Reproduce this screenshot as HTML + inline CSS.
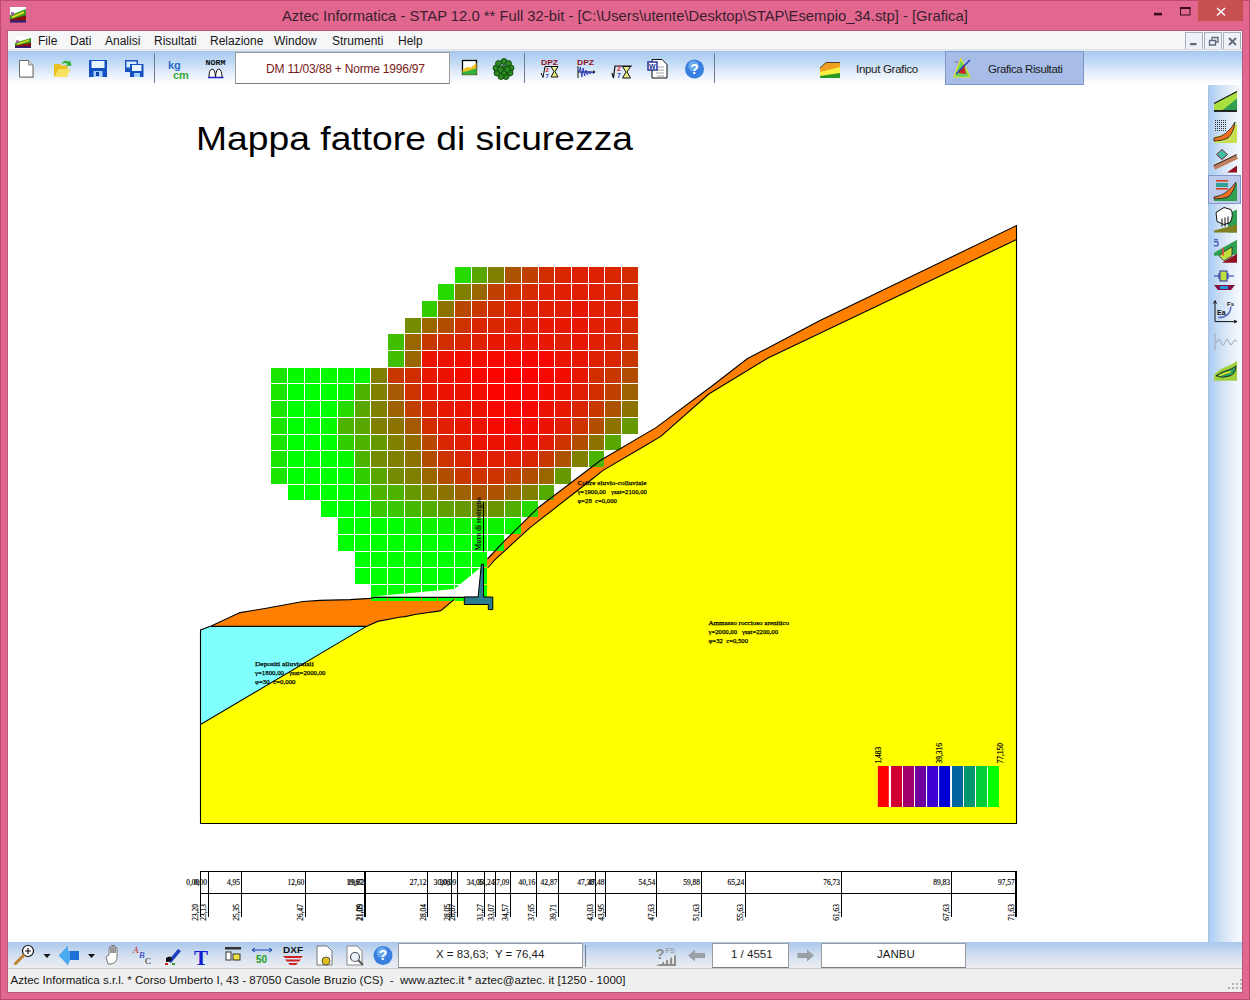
<!DOCTYPE html>
<html><head><meta charset="utf-8">
<style>
*{box-sizing:border-box}
html,body{margin:0;padding:0}
body{width:1250px;height:1000px;position:relative;overflow:hidden;background:#e2678f;font-family:"Liberation Sans",sans-serif;}
.abs{position:absolute}
#ttext{position:absolute;left:282px;top:8px;font-size:14.8px;color:#3a1e30;white-space:nowrap;}
#client{position:absolute;left:8px;top:31px;width:1234px;height:961px;background:#fff;}
#menu{position:absolute;left:8px;top:31px;width:1234px;height:20px;background:#f5f6f8;}
#menu span{position:absolute;top:3px;font-size:12px;color:#151515;}
#tb{position:absolute;left:8px;top:49px;width:1234px;height:39px;background:linear-gradient(#dde0e4 0px,#dde0e4 1px,#e2eefa 1px,#e2eefa 2px,#acc3da 2px,#acc3da 3px,#aacbf2 3px,#c3dbf5 14px,#e4eefa 24px,#fff 35px);}
#rtb{position:absolute;left:1208px;top:85px;width:34px;height:857px;background:linear-gradient(90deg,#aac0d8 0px,#aac0d8 1px,#aecff5 1px,#aecff5 3px,#c6dcf3 10px,#e3edf9 22px,#f6f9fe 32px);}
#btb{position:absolute;left:8px;top:942px;width:1234px;height:27px;background:linear-gradient(#a9c7ec,#d2dff0 50%,#eceef1);border-bottom:1px solid #c9cbce}
#status{position:absolute;left:8px;top:969px;width:1234px;height:23px;background:#efefef;}
#status span{position:absolute;left:2.5px;top:4.5px;font-size:11.55px;color:#151515;white-space:nowrap}
.box{position:absolute;background:#fff;border:1px solid #9c9c9c;border-bottom-color:#7c7c7c}
.sep{position:absolute;width:1px;background:#6d7c90;}
.tbt{position:absolute;font-size:11.5px;color:#1b1b1b;white-space:nowrap}
#closebtn{position:absolute;left:1198px;top:0;width:45px;height:21px;background:#c75050;}
.mdib{position:absolute;top:32px;width:18px;height:18px;border:1px solid #a8b0bc;background:#eef2f7}
</style></head><body>
<div id="ttext">Aztec Informatica - STAP 12.0 ** Full 32-bit - [C:\Users\utente\Desktop\STAP\Esempio_34.stp] - [Grafica]</div>
<div class="abs" style="left:0;top:0;width:1250px;height:1000px;border:1px solid #bb4a74"></div><div class="abs" style="left:7px;top:30px;width:1236px;height:963px;background:#b55a7e"></div><div id="closebtn"></div>
<div id="client"></div>
<div id="menu">
<span style="left:30px">File</span><span style="left:62px">Dati</span><span style="left:97px">Analisi</span><span style="left:146px">Risultati</span><span style="left:202px">Relazione</span><span style="left:266px">Window</span><span style="left:324px">Strumenti</span><span style="left:390px">Help</span>
</div>
<div class="mdib" style="left:1185px"></div><div class="mdib" style="left:1204px"></div><div class="mdib" style="left:1223px"></div>
<div id="tb"></div>
<div class="sep" style="left:154px;top:53px;height:30px"></div>
<div class="sep" style="left:524px;top:53px;height:30px"></div>
<div class="sep" style="left:714px;top:53px;height:30px"></div>
<div class="box" style="left:235px;top:52px;width:215px;height:32px"></div>
<div class="tbt" style="left:266px;top:62px;color:#7a1a1a;font-size:12px;letter-spacing:-0.2px">DM 11/03/88 + Norme 1996/97</div>
<div class="tbt" style="left:856px;top:63px;letter-spacing:-0.3px">Input Grafico</div>
<div class="abs" style="left:945px;top:51px;width:139px;height:34px;background:#a7bde8;border:1px solid #7d95c8"></div>
<div class="tbt" style="left:988px;top:63px;letter-spacing:-0.4px">Grafica Risultati</div>
<div id="rtb"></div>
<div class="abs" style="left:1208px;top:175px;width:33px;height:29px;background:#bccbeb;border:1px solid #8397c9"></div>
<div id="btb"></div>
<div class="box" style="left:398px;top:943px;width:185px;height:25px"></div>
<div class="tbt" style="left:436px;top:948px">X = 83,63;&nbsp; Y = 76,44</div>
<div class="sep" style="left:585px;top:945px;height:22px"></div>
<div class="box" style="left:712px;top:943px;width:77px;height:25px"></div>
<div class="tbt" style="left:731px;top:948px">1 / 4551</div>
<div class="box" style="left:821px;top:943px;width:145px;height:25px"></div>
<div class="tbt" style="left:877px;top:948px">JANBU</div>
<div id="status"><span>Aztec Informatica s.r.l. * Corso Umberto I, 43 - 87050 Casole Bruzio (CS)&nbsp; -&nbsp; www.aztec.it * aztec@aztec. it [1250 - 1000]</span></div>

<svg class="abs" style="left:0;top:0" width="1250" height="1000" viewBox="0 0 1250 1000">
<text x="196" y="149.7" font-family="Liberation Sans" font-size="32.5" textLength="437" lengthAdjust="spacingAndGlyphs" fill="#000">Mappa fattore di sicurezza</text>
<g stroke="none">
<polygon fill="#ffff00" points="200.5,724.5 366.4,626.4 377.6,621.4 399.4,617.2 405,616.6 416.2,614.2 438.6,611.1 441.4,610.2 454.3,599.3 479,597.4 484,569 495,559.6 530,527.6 590,480.8 603,470.4 645,445.8 660.8,436.4 708.8,394 768,358 1016.5,239.6 1016.5,823.8 200.5,823.8"/>
<polygon fill="#80ffff" points="200.5,630 211.2,626.1 366.4,626.4 200.5,724.5"/>
<polygon fill="#ff8000" points="211.2,626.1 240,612.6 265,608.5 303,601.5 320,600.4 350,599.6 370,598.4 375,597.4 464,597.4 454.3,599.3 441.4,610.2 438.6,611.1 416.2,614.2 405,616.6 399.4,617.2 377.6,621.4 366.4,626.4"/>
<polygon fill="#ff8000" points="483.5,562 505,540.4 538.4,507.5 601,460 656,427.6 712,386 747.2,358.8 820,320.6 1016.5,225.6 1016.5,239.6 768,358 708.8,394 660.8,436.4 645,445.8 603,470.4 590,480.8 530,527.6 495,559.6 484,569"/>
</g>
<g shape-rendering="crispEdges">
<rect x="455" y="267" width="16" height="16" fill="#26d900"/>
<rect x="472" y="267" width="15" height="16" fill="#59a600"/>
<rect x="488" y="267" width="16" height="16" fill="#807f00"/>
<rect x="505" y="267" width="16" height="16" fill="#ad5200"/>
<rect x="522" y="267" width="16" height="16" fill="#bf4000"/>
<rect x="539" y="267" width="15" height="16" fill="#d12e00"/>
<rect x="555" y="267" width="16" height="16" fill="#d92600"/>
<rect x="572" y="267" width="16" height="16" fill="#de2100"/>
<rect x="589" y="267" width="15" height="16" fill="#de2100"/>
<rect x="605" y="267" width="16" height="16" fill="#d92600"/>
<rect x="622" y="267" width="16" height="16" fill="#d42b00"/>
<rect x="438" y="284" width="16" height="16" fill="#26d900"/>
<rect x="455" y="284" width="16" height="16" fill="#807f00"/>
<rect x="472" y="284" width="15" height="16" fill="#996600"/>
<rect x="488" y="284" width="16" height="16" fill="#bf4000"/>
<rect x="505" y="284" width="16" height="16" fill="#cc3300"/>
<rect x="522" y="284" width="16" height="16" fill="#d42b00"/>
<rect x="539" y="284" width="15" height="16" fill="#de2100"/>
<rect x="555" y="284" width="16" height="16" fill="#e01f00"/>
<rect x="572" y="284" width="16" height="16" fill="#e01f00"/>
<rect x="589" y="284" width="15" height="16" fill="#e01f00"/>
<rect x="605" y="284" width="16" height="16" fill="#db2400"/>
<rect x="622" y="284" width="16" height="16" fill="#d42b00"/>
<rect x="422" y="301" width="15" height="16" fill="#33cc00"/>
<rect x="438" y="301" width="16" height="16" fill="#8c7300"/>
<rect x="455" y="301" width="16" height="16" fill="#b84700"/>
<rect x="472" y="301" width="15" height="16" fill="#c73800"/>
<rect x="488" y="301" width="16" height="16" fill="#d12e00"/>
<rect x="505" y="301" width="16" height="16" fill="#db2400"/>
<rect x="522" y="301" width="16" height="16" fill="#de2100"/>
<rect x="539" y="301" width="15" height="16" fill="#e01f00"/>
<rect x="555" y="301" width="16" height="16" fill="#e01f00"/>
<rect x="572" y="301" width="16" height="16" fill="#e61900"/>
<rect x="589" y="301" width="15" height="16" fill="#e01f00"/>
<rect x="605" y="301" width="16" height="16" fill="#de2100"/>
<rect x="622" y="301" width="16" height="16" fill="#d92600"/>
<rect x="405" y="318" width="16" height="15" fill="#738c00"/>
<rect x="422" y="318" width="15" height="15" fill="#996600"/>
<rect x="438" y="318" width="16" height="15" fill="#b24d00"/>
<rect x="455" y="318" width="16" height="15" fill="#cc3300"/>
<rect x="472" y="318" width="15" height="15" fill="#d92600"/>
<rect x="488" y="318" width="16" height="15" fill="#d92600"/>
<rect x="505" y="318" width="16" height="15" fill="#de2100"/>
<rect x="522" y="318" width="16" height="15" fill="#e01f00"/>
<rect x="539" y="318" width="15" height="15" fill="#e61900"/>
<rect x="555" y="318" width="16" height="15" fill="#e61900"/>
<rect x="572" y="318" width="16" height="15" fill="#e61900"/>
<rect x="589" y="318" width="15" height="15" fill="#e01f00"/>
<rect x="605" y="318" width="16" height="15" fill="#de2100"/>
<rect x="622" y="318" width="16" height="15" fill="#d42b00"/>
<rect x="388" y="334" width="16" height="16" fill="#40bf00"/>
<rect x="405" y="334" width="16" height="16" fill="#996600"/>
<rect x="422" y="334" width="15" height="16" fill="#c73800"/>
<rect x="438" y="334" width="16" height="16" fill="#d12e00"/>
<rect x="455" y="334" width="16" height="16" fill="#d92600"/>
<rect x="472" y="334" width="15" height="16" fill="#de2100"/>
<rect x="488" y="334" width="16" height="16" fill="#e61900"/>
<rect x="505" y="334" width="16" height="16" fill="#e61900"/>
<rect x="522" y="334" width="16" height="16" fill="#e61900"/>
<rect x="539" y="334" width="15" height="16" fill="#e61900"/>
<rect x="555" y="334" width="16" height="16" fill="#e01f00"/>
<rect x="572" y="334" width="16" height="16" fill="#e61900"/>
<rect x="589" y="334" width="15" height="16" fill="#e01f00"/>
<rect x="605" y="334" width="16" height="16" fill="#d92600"/>
<rect x="622" y="334" width="16" height="16" fill="#d12e00"/>
<rect x="388" y="351" width="16" height="16" fill="#40bf00"/>
<rect x="405" y="351" width="16" height="16" fill="#996600"/>
<rect x="422" y="351" width="15" height="16" fill="#eb1400"/>
<rect x="438" y="351" width="16" height="16" fill="#ed1200"/>
<rect x="455" y="351" width="16" height="16" fill="#f20d00"/>
<rect x="472" y="351" width="15" height="16" fill="#f20d00"/>
<rect x="488" y="351" width="16" height="16" fill="#f70800"/>
<rect x="505" y="351" width="16" height="16" fill="#f70800"/>
<rect x="522" y="351" width="16" height="16" fill="#f70800"/>
<rect x="539" y="351" width="15" height="16" fill="#f70800"/>
<rect x="555" y="351" width="16" height="16" fill="#eb1400"/>
<rect x="572" y="351" width="16" height="16" fill="#e61900"/>
<rect x="589" y="351" width="15" height="16" fill="#de2100"/>
<rect x="605" y="351" width="16" height="16" fill="#d92600"/>
<rect x="622" y="351" width="16" height="16" fill="#c73800"/>
<rect x="271" y="368" width="16" height="15" fill="#1ae500"/>
<rect x="288" y="368" width="16" height="15" fill="#05fa00"/>
<rect x="305" y="368" width="15" height="15" fill="#05fa00"/>
<rect x="321" y="368" width="16" height="15" fill="#05fa00"/>
<rect x="338" y="368" width="16" height="15" fill="#05fa00"/>
<rect x="355" y="368" width="15" height="15" fill="#05fa00"/>
<rect x="371" y="368" width="16" height="15" fill="#807f00"/>
<rect x="388" y="368" width="16" height="15" fill="#c73800"/>
<rect x="405" y="368" width="16" height="15" fill="#d12e00"/>
<rect x="422" y="368" width="15" height="15" fill="#e61900"/>
<rect x="438" y="368" width="16" height="15" fill="#ed1200"/>
<rect x="455" y="368" width="16" height="15" fill="#f20d00"/>
<rect x="472" y="368" width="15" height="15" fill="#f70800"/>
<rect x="488" y="368" width="16" height="15" fill="#fa0500"/>
<rect x="505" y="368" width="16" height="15" fill="#ff0000"/>
<rect x="522" y="368" width="16" height="15" fill="#fa0500"/>
<rect x="539" y="368" width="15" height="15" fill="#f70800"/>
<rect x="555" y="368" width="16" height="15" fill="#f20d00"/>
<rect x="572" y="368" width="16" height="15" fill="#e61900"/>
<rect x="589" y="368" width="15" height="15" fill="#d12e00"/>
<rect x="605" y="368" width="16" height="15" fill="#c73800"/>
<rect x="622" y="368" width="16" height="15" fill="#b24d00"/>
<rect x="271" y="384" width="16" height="16" fill="#1ae500"/>
<rect x="288" y="384" width="16" height="16" fill="#00ff00"/>
<rect x="305" y="384" width="15" height="16" fill="#00ff00"/>
<rect x="321" y="384" width="16" height="16" fill="#00ff00"/>
<rect x="338" y="384" width="16" height="16" fill="#05fa00"/>
<rect x="355" y="384" width="15" height="16" fill="#4cb300"/>
<rect x="371" y="384" width="16" height="16" fill="#807f00"/>
<rect x="388" y="384" width="16" height="16" fill="#a65900"/>
<rect x="405" y="384" width="16" height="16" fill="#cc3300"/>
<rect x="422" y="384" width="15" height="16" fill="#e61900"/>
<rect x="438" y="384" width="16" height="16" fill="#eb1400"/>
<rect x="455" y="384" width="16" height="16" fill="#ed1200"/>
<rect x="472" y="384" width="15" height="16" fill="#f20d00"/>
<rect x="488" y="384" width="16" height="16" fill="#fa0500"/>
<rect x="505" y="384" width="16" height="16" fill="#fa0500"/>
<rect x="522" y="384" width="16" height="16" fill="#f70800"/>
<rect x="539" y="384" width="15" height="16" fill="#f20d00"/>
<rect x="555" y="384" width="16" height="16" fill="#ed1200"/>
<rect x="572" y="384" width="16" height="16" fill="#e01f00"/>
<rect x="589" y="384" width="15" height="16" fill="#d12e00"/>
<rect x="605" y="384" width="16" height="16" fill="#bf4000"/>
<rect x="622" y="384" width="16" height="16" fill="#9e6100"/>
<rect x="271" y="401" width="16" height="16" fill="#1ae500"/>
<rect x="288" y="401" width="16" height="16" fill="#00ff00"/>
<rect x="305" y="401" width="15" height="16" fill="#00ff00"/>
<rect x="321" y="401" width="16" height="16" fill="#00ff00"/>
<rect x="338" y="401" width="16" height="16" fill="#26d900"/>
<rect x="355" y="401" width="15" height="16" fill="#59a600"/>
<rect x="371" y="401" width="16" height="16" fill="#807f00"/>
<rect x="388" y="401" width="16" height="16" fill="#9e6100"/>
<rect x="405" y="401" width="16" height="16" fill="#bf4000"/>
<rect x="422" y="401" width="15" height="16" fill="#d92600"/>
<rect x="438" y="401" width="16" height="16" fill="#e61900"/>
<rect x="455" y="401" width="16" height="16" fill="#eb1400"/>
<rect x="472" y="401" width="15" height="16" fill="#ed1200"/>
<rect x="488" y="401" width="16" height="16" fill="#f70800"/>
<rect x="505" y="401" width="16" height="16" fill="#f70800"/>
<rect x="522" y="401" width="16" height="16" fill="#f70800"/>
<rect x="539" y="401" width="15" height="16" fill="#ed1200"/>
<rect x="555" y="401" width="16" height="16" fill="#e61900"/>
<rect x="572" y="401" width="16" height="16" fill="#d92600"/>
<rect x="589" y="401" width="15" height="16" fill="#c73800"/>
<rect x="605" y="401" width="16" height="16" fill="#ad5200"/>
<rect x="622" y="401" width="16" height="16" fill="#8c7300"/>
<rect x="271" y="418" width="16" height="16" fill="#1ae500"/>
<rect x="288" y="418" width="16" height="16" fill="#00ff00"/>
<rect x="305" y="418" width="15" height="16" fill="#00ff00"/>
<rect x="321" y="418" width="16" height="16" fill="#05fa00"/>
<rect x="338" y="418" width="16" height="16" fill="#4cb300"/>
<rect x="355" y="418" width="15" height="16" fill="#59a600"/>
<rect x="371" y="418" width="16" height="16" fill="#807f00"/>
<rect x="388" y="418" width="16" height="16" fill="#8c7300"/>
<rect x="405" y="418" width="16" height="16" fill="#a65900"/>
<rect x="422" y="418" width="15" height="16" fill="#d12e00"/>
<rect x="438" y="418" width="16" height="16" fill="#e01f00"/>
<rect x="455" y="418" width="16" height="16" fill="#e61900"/>
<rect x="472" y="418" width="15" height="16" fill="#eb1400"/>
<rect x="488" y="418" width="16" height="16" fill="#f70800"/>
<rect x="505" y="418" width="16" height="16" fill="#f70800"/>
<rect x="522" y="418" width="16" height="16" fill="#f20d00"/>
<rect x="539" y="418" width="15" height="16" fill="#eb1400"/>
<rect x="555" y="418" width="16" height="16" fill="#e01f00"/>
<rect x="572" y="418" width="16" height="16" fill="#cc3300"/>
<rect x="589" y="418" width="15" height="16" fill="#b24d00"/>
<rect x="605" y="418" width="16" height="16" fill="#8c7300"/>
<rect x="622" y="418" width="16" height="16" fill="#669900"/>
<rect x="271" y="435" width="16" height="15" fill="#1ae500"/>
<rect x="288" y="435" width="16" height="15" fill="#00ff00"/>
<rect x="305" y="435" width="15" height="15" fill="#00ff00"/>
<rect x="321" y="435" width="16" height="15" fill="#00ff00"/>
<rect x="338" y="435" width="16" height="15" fill="#33cc00"/>
<rect x="355" y="435" width="15" height="15" fill="#4cb300"/>
<rect x="371" y="435" width="16" height="15" fill="#669900"/>
<rect x="388" y="435" width="16" height="15" fill="#807f00"/>
<rect x="405" y="435" width="16" height="15" fill="#946b00"/>
<rect x="422" y="435" width="15" height="15" fill="#b84700"/>
<rect x="438" y="435" width="16" height="15" fill="#d92600"/>
<rect x="455" y="435" width="16" height="15" fill="#e01f00"/>
<rect x="472" y="435" width="15" height="15" fill="#eb1400"/>
<rect x="488" y="435" width="16" height="15" fill="#ed1200"/>
<rect x="505" y="435" width="16" height="15" fill="#ed1200"/>
<rect x="522" y="435" width="16" height="15" fill="#eb1400"/>
<rect x="539" y="435" width="15" height="15" fill="#e01f00"/>
<rect x="555" y="435" width="16" height="15" fill="#cc3300"/>
<rect x="572" y="435" width="16" height="15" fill="#b24d00"/>
<rect x="589" y="435" width="15" height="15" fill="#8c7300"/>
<rect x="605" y="435" width="16" height="15" fill="#59a600"/>
<rect x="271" y="451" width="16" height="16" fill="#1ae500"/>
<rect x="288" y="451" width="16" height="16" fill="#00ff00"/>
<rect x="305" y="451" width="15" height="16" fill="#00ff00"/>
<rect x="321" y="451" width="16" height="16" fill="#00ff00"/>
<rect x="338" y="451" width="16" height="16" fill="#05fa00"/>
<rect x="355" y="451" width="15" height="16" fill="#4cb300"/>
<rect x="371" y="451" width="16" height="16" fill="#738c00"/>
<rect x="388" y="451" width="16" height="16" fill="#807f00"/>
<rect x="405" y="451" width="16" height="16" fill="#8c7300"/>
<rect x="422" y="451" width="15" height="16" fill="#b24d00"/>
<rect x="438" y="451" width="16" height="16" fill="#cc3300"/>
<rect x="455" y="451" width="16" height="16" fill="#d92600"/>
<rect x="472" y="451" width="15" height="16" fill="#e01f00"/>
<rect x="488" y="451" width="16" height="16" fill="#e01f00"/>
<rect x="505" y="451" width="16" height="16" fill="#e01f00"/>
<rect x="522" y="451" width="16" height="16" fill="#d92600"/>
<rect x="539" y="451" width="15" height="16" fill="#c73800"/>
<rect x="555" y="451" width="16" height="16" fill="#ad5200"/>
<rect x="572" y="451" width="16" height="16" fill="#807f00"/>
<rect x="589" y="451" width="15" height="16" fill="#4cb300"/>
<rect x="271" y="468" width="16" height="16" fill="#1ae500"/>
<rect x="288" y="468" width="16" height="16" fill="#00ff00"/>
<rect x="305" y="468" width="15" height="16" fill="#00ff00"/>
<rect x="321" y="468" width="16" height="16" fill="#00ff00"/>
<rect x="338" y="468" width="16" height="16" fill="#00ff00"/>
<rect x="355" y="468" width="15" height="16" fill="#33cc00"/>
<rect x="371" y="468" width="16" height="16" fill="#59a600"/>
<rect x="388" y="468" width="16" height="16" fill="#738c00"/>
<rect x="405" y="468" width="16" height="16" fill="#807f00"/>
<rect x="422" y="468" width="15" height="16" fill="#996600"/>
<rect x="438" y="468" width="16" height="16" fill="#b24d00"/>
<rect x="455" y="468" width="16" height="16" fill="#c73800"/>
<rect x="472" y="468" width="15" height="16" fill="#cc3300"/>
<rect x="488" y="468" width="16" height="16" fill="#cc3300"/>
<rect x="505" y="468" width="16" height="16" fill="#bf4000"/>
<rect x="522" y="468" width="16" height="16" fill="#b24d00"/>
<rect x="539" y="468" width="15" height="16" fill="#996600"/>
<rect x="555" y="468" width="16" height="16" fill="#669900"/>
<rect x="288" y="485" width="16" height="15" fill="#00ff00"/>
<rect x="305" y="485" width="15" height="15" fill="#00ff00"/>
<rect x="321" y="485" width="16" height="15" fill="#00ff00"/>
<rect x="338" y="485" width="16" height="15" fill="#00ff00"/>
<rect x="355" y="485" width="15" height="15" fill="#0df200"/>
<rect x="371" y="485" width="16" height="15" fill="#4cb300"/>
<rect x="388" y="485" width="16" height="15" fill="#4cb300"/>
<rect x="405" y="485" width="16" height="15" fill="#669900"/>
<rect x="422" y="485" width="15" height="15" fill="#807f00"/>
<rect x="438" y="485" width="16" height="15" fill="#8c7300"/>
<rect x="455" y="485" width="16" height="15" fill="#9e6100"/>
<rect x="472" y="485" width="15" height="15" fill="#ad5200"/>
<rect x="488" y="485" width="16" height="15" fill="#ad5200"/>
<rect x="505" y="485" width="16" height="15" fill="#996600"/>
<rect x="522" y="485" width="16" height="15" fill="#807f00"/>
<rect x="539" y="485" width="15" height="15" fill="#54ab00"/>
<rect x="321" y="501" width="16" height="16" fill="#00ff00"/>
<rect x="338" y="501" width="16" height="16" fill="#00ff00"/>
<rect x="355" y="501" width="15" height="16" fill="#00ff00"/>
<rect x="371" y="501" width="16" height="16" fill="#38c700"/>
<rect x="388" y="501" width="16" height="16" fill="#38c700"/>
<rect x="405" y="501" width="16" height="16" fill="#47b800"/>
<rect x="422" y="501" width="15" height="16" fill="#52ad00"/>
<rect x="438" y="501" width="16" height="16" fill="#619e00"/>
<rect x="455" y="501" width="16" height="16" fill="#669900"/>
<rect x="472" y="501" width="15" height="16" fill="#738c00"/>
<rect x="488" y="501" width="16" height="16" fill="#6b9400"/>
<rect x="505" y="501" width="16" height="16" fill="#52ad00"/>
<rect x="522" y="501" width="16" height="16" fill="#26d900"/>
<rect x="338" y="518" width="16" height="16" fill="#00ff00"/>
<rect x="355" y="518" width="15" height="16" fill="#00ff00"/>
<rect x="371" y="518" width="16" height="16" fill="#00ff00"/>
<rect x="388" y="518" width="16" height="16" fill="#00ff00"/>
<rect x="405" y="518" width="16" height="16" fill="#0df200"/>
<rect x="422" y="518" width="15" height="16" fill="#0df200"/>
<rect x="438" y="518" width="16" height="16" fill="#0df200"/>
<rect x="455" y="518" width="16" height="16" fill="#0df200"/>
<rect x="472" y="518" width="15" height="16" fill="#0df200"/>
<rect x="488" y="518" width="16" height="16" fill="#0df200"/>
<rect x="505" y="518" width="16" height="16" fill="#05fa00"/>
<rect x="338" y="535" width="16" height="16" fill="#00ff00"/>
<rect x="355" y="535" width="15" height="16" fill="#00ff00"/>
<rect x="371" y="535" width="16" height="16" fill="#00ff00"/>
<rect x="388" y="535" width="16" height="16" fill="#00ff00"/>
<rect x="405" y="535" width="16" height="16" fill="#00ff00"/>
<rect x="422" y="535" width="15" height="16" fill="#00ff00"/>
<rect x="438" y="535" width="16" height="16" fill="#00ff00"/>
<rect x="455" y="535" width="16" height="16" fill="#00ff00"/>
<rect x="472" y="535" width="15" height="16" fill="#00ff00"/>
<rect x="488" y="535" width="16" height="16" fill="#00ff00"/>
<rect x="355" y="552" width="15" height="15" fill="#00ff00"/>
<rect x="371" y="552" width="16" height="15" fill="#00ff00"/>
<rect x="388" y="552" width="16" height="15" fill="#00ff00"/>
<rect x="405" y="552" width="16" height="15" fill="#00ff00"/>
<rect x="422" y="552" width="15" height="15" fill="#00ff00"/>
<rect x="438" y="552" width="16" height="15" fill="#00ff00"/>
<rect x="455" y="552" width="16" height="15" fill="#00ff00"/>
<rect x="472" y="552" width="15" height="15" fill="#00ff00"/>
<rect x="355" y="568" width="15" height="16" fill="#00ff00"/>
<rect x="371" y="568" width="16" height="16" fill="#00ff00"/>
<rect x="388" y="568" width="16" height="16" fill="#00ff00"/>
<rect x="405" y="568" width="16" height="16" fill="#00ff00"/>
<rect x="422" y="568" width="15" height="16" fill="#00ff00"/>
<rect x="438" y="568" width="16" height="16" fill="#00ff00"/>
<rect x="455" y="568" width="16" height="16" fill="#00ff00"/>
<rect x="472" y="568" width="15" height="16" fill="#00ff00"/>
<rect x="371" y="585" width="16" height="16" fill="#00ff00"/>
<rect x="388" y="585" width="16" height="16" fill="#00ff00"/>
<rect x="405" y="585" width="16" height="16" fill="#00ff00"/>
<rect x="422" y="585" width="15" height="16" fill="#00ff00"/>
<rect x="438" y="585" width="16" height="16" fill="#00ff00"/>
<rect x="455" y="585" width="16" height="16" fill="#00ff00"/>
<rect x="472" y="585" width="15" height="16" fill="#00ff00"/>
</g>
<polygon fill="#fff" points="371.4,596.5 454.3,589 480.5,567.5 479,597.4"/>
<g fill="none" stroke="#000" stroke-width="1.1">
<polyline points="200.5,823.5 200.5,630 211.2,626.1 240,612.6 265,608.5 303,601.5 320,600.4 350,599.6 370,598.4 375,597.4 479,597.4"/>
<polyline points="211.2,626.4 366.4,626.4"/>
<polyline points="200.5,724.5 366.4,626.4 377.6,621.4 399.4,617.2 405,616.6 416.2,614.2 438.6,611.1 441.4,610.2 454.3,599.3"/>
<polyline points="487.5,559 505,540.4 538.4,507.5 601,460 656,427.6 712,386 747.2,358.8 820,320.6 1016.5,225.6 1016.5,823.5 200,823.5"/>
<polyline points="1016.5,239.6 768,358 708.8,394 660.8,436.4 645,445.8 603,470.4 590,480.8 530,527.6 495,559.6 487.5,568"/>
</g>
<polygon fill="#2a7d8c" stroke="#000" stroke-width="1" points="481.4,564.3 483.5,564.3 483.5,597 492.8,597 492.8,609.6 488.3,609.6 488.3,604.5 464.3,604.5 464.3,597 478.1,597"/>

<text x="577.4" y="484.8" font-family="Liberation Serif" font-size="7" textLength="69" lengthAdjust="spacingAndGlyphs" fill="#000" stroke="#000" stroke-width="0.25">Coltre eluvio-colluviale</text>
<text x="577.4" y="493.7" font-family="Liberation Serif" font-size="7" textLength="69.5" lengthAdjust="spacingAndGlyphs" fill="#000" stroke="#000" stroke-width="0.25">γ=1900,00 &#160; γsat=2100,00</text>
<text x="577.4" y="502.6" font-family="Liberation Serif" font-size="7" textLength="39.5" lengthAdjust="spacingAndGlyphs" fill="#000" stroke="#000" stroke-width="0.25">φ=28 &#160;c=0,000</text>
<text x="708.5" y="624.9" font-family="Liberation Serif" font-size="7" textLength="80.5" lengthAdjust="spacingAndGlyphs" fill="#000" stroke="#000" stroke-width="0.25">Ammasso roccioso arenitico</text>
<text x="708.5" y="633.8" font-family="Liberation Serif" font-size="7" textLength="69.5" lengthAdjust="spacingAndGlyphs" fill="#000" stroke="#000" stroke-width="0.25">γ=2000,00 &#160; γsat=2200,00</text>
<text x="708.5" y="642.7" font-family="Liberation Serif" font-size="7" textLength="39.5" lengthAdjust="spacingAndGlyphs" fill="#000" stroke="#000" stroke-width="0.25">φ=32 &#160;c=0,500</text>
<text x="255" y="666.3" font-family="Liberation Serif" font-size="7" textLength="58.75" lengthAdjust="spacingAndGlyphs" fill="#000" stroke="#000" stroke-width="0.25">Depositi alluvionali</text>
<text x="255" y="675.2" font-family="Liberation Serif" font-size="7" textLength="70.5" lengthAdjust="spacingAndGlyphs" fill="#000" stroke="#000" stroke-width="0.25">γ=1800,00 &#160; γsat=2000,00</text>
<text x="255" y="684.1" font-family="Liberation Serif" font-size="7" textLength="40.5" lengthAdjust="spacingAndGlyphs" fill="#000" stroke="#000" stroke-width="0.25">φ=30 &#160;c=0,000</text>
<text transform="translate(480.7,550.5) rotate(-90)" font-family="Liberation Serif" font-size="8" font-weight="bold" textLength="53.5" lengthAdjust="spacingAndGlyphs" fill="#111">Muro di sostegno</text>
<line x1="483.5" y1="502.2" x2="483.5" y2="551.5" stroke="#000" stroke-width="1"/>
<rect x="877.8" y="766" width="121" height="41" fill="#fff"/>
<rect x="877.8" y="766" width="11" height="41" fill="#ff0000"/>
<rect x="891" y="766" width="11" height="41" fill="#d20032"/>
<rect x="903" y="766" width="11" height="41" fill="#a0006e"/>
<rect x="915" y="766" width="11" height="41" fill="#6e00a0"/>
<rect x="927.1" y="766" width="11" height="41" fill="#3c00d2"/>
<rect x="939.1" y="766" width="11" height="41" fill="#0000d2"/>
<rect x="952" y="766" width="11" height="41" fill="#0064a0"/>
<rect x="964" y="766" width="11" height="41" fill="#00966e"/>
<rect x="976" y="766" width="11" height="41" fill="#00cd37"/>
<rect x="987.9" y="766" width="11" height="41" fill="#00ff00"/>
<text transform="translate(881.2,763.5) rotate(-90)" font-family="Liberation Serif" font-size="7.5" fill="#000" stroke="#000" stroke-width="0.2">1,483</text>
<text transform="translate(942,763.5) rotate(-90)" font-family="Liberation Serif" font-size="7.5" fill="#000" stroke="#000" stroke-width="0.2">39,316</text>
<text transform="translate(1002.6,763.5) rotate(-90)" font-family="Liberation Serif" font-size="7.5" fill="#000" stroke="#000" stroke-width="0.2">77,150</text>
<g stroke="#000" stroke-width="1.1" shape-rendering="crispEdges">
<line x1="200" y1="871.5" x2="1017" y2="871.5"/><line x1="200" y1="893.5" x2="1017" y2="893.5"/>
<line x1="200.5" y1="871" x2="200.5" y2="917"/>
<line x1="208.2" y1="871" x2="208.2" y2="917"/>
<line x1="241.3" y1="871" x2="241.3" y2="917"/>
<line x1="305.5" y1="871" x2="305.5" y2="917"/>
<line x1="364.3" y1="871" x2="364.3" y2="917"/>
<line x1="365.5" y1="871" x2="365.5" y2="917"/>
<line x1="427.7" y1="871" x2="427.7" y2="917"/>
<line x1="451.7" y1="871" x2="451.7" y2="917"/>
<line x1="457.5" y1="871" x2="457.5" y2="917"/>
<line x1="484.8" y1="871" x2="484.8" y2="917"/>
<line x1="495.7" y1="871" x2="495.7" y2="917"/>
<line x1="510.5" y1="871" x2="510.5" y2="917"/>
<line x1="536.5" y1="871" x2="536.5" y2="917"/>
<line x1="558.6" y1="871" x2="558.6" y2="917"/>
<line x1="595.4" y1="871" x2="595.4" y2="917"/>
<line x1="605.8" y1="871" x2="605.8" y2="917"/>
<line x1="656.5" y1="871" x2="656.5" y2="917"/>
<line x1="701.3" y1="871" x2="701.3" y2="917"/>
<line x1="745.5" y1="871" x2="745.5" y2="917"/>
<line x1="841.3" y1="871" x2="841.3" y2="917"/>
<line x1="951.2" y1="871" x2="951.2" y2="917"/>
<line x1="1016" y1="871" x2="1016" y2="917"/>
</g>
<g font-family="Liberation Serif" font-size="7.5" fill="#000" stroke="#000" stroke-width="0.15">
<text x="199.3" y="884.7" text-anchor="end">0,00</text>
<text x="207" y="884.7" text-anchor="end">0,00</text>
<text x="240.1" y="884.7" text-anchor="end">4,95</text>
<text x="304.3" y="884.7" text-anchor="end">12,60</text>
<text x="363.1" y="884.7" text-anchor="end">19,67</text>
<text x="364.3" y="884.7" text-anchor="end">19,82</text>
<text x="426.5" y="884.7" text-anchor="end">27,12</text>
<text x="450.5" y="884.7" text-anchor="end">30,06</text>
<text x="456.3" y="884.7" text-anchor="end">30,09</text>
<text x="483.6" y="884.7" text-anchor="end">34,05</text>
<text x="494.5" y="884.7" text-anchor="end">34,24</text>
<text x="509.3" y="884.7" text-anchor="end">37,09</text>
<text x="535.3" y="884.7" text-anchor="end">40,16</text>
<text x="557.4" y="884.7" text-anchor="end">42,87</text>
<text x="594.2" y="884.7" text-anchor="end">47,38</text>
<text x="604.6" y="884.7" text-anchor="end">47,48</text>
<text x="655.3" y="884.7" text-anchor="end">54,54</text>
<text x="700.1" y="884.7" text-anchor="end">59,88</text>
<text x="744.3" y="884.7" text-anchor="end">65,24</text>
<text x="840.1" y="884.7" text-anchor="end">76,73</text>
<text x="950" y="884.7" text-anchor="end">89,83</text>
<text x="1014.8" y="884.7" text-anchor="end">97,57</text>
<text transform="translate(198.3,920.8) rotate(-90)">23,20</text>
<text transform="translate(206,920.8) rotate(-90)">23,13</text>
<text transform="translate(239.1,920.8) rotate(-90)">25,35</text>
<text transform="translate(303.3,920.8) rotate(-90)">26,47</text>
<text transform="translate(362.1,920.8) rotate(-90)">21,09</text>
<text transform="translate(363.3,920.8) rotate(-90)">21,05</text>
<text transform="translate(425.5,920.8) rotate(-90)">28,04</text>
<text transform="translate(449.5,920.8) rotate(-90)">28,05</text>
<text transform="translate(455.3,920.8) rotate(-90)">28,07</text>
<text transform="translate(482.6,920.8) rotate(-90)">31,27</text>
<text transform="translate(493.5,920.8) rotate(-90)">33,07</text>
<text transform="translate(508.3,920.8) rotate(-90)">34,57</text>
<text transform="translate(534.3,920.8) rotate(-90)">37,65</text>
<text transform="translate(556.4,920.8) rotate(-90)">39,71</text>
<text transform="translate(593.2,920.8) rotate(-90)">43,03</text>
<text transform="translate(603.6,920.8) rotate(-90)">43,95</text>
<text transform="translate(654.3,920.8) rotate(-90)">47,63</text>
<text transform="translate(699.1,920.8) rotate(-90)">51,63</text>
<text transform="translate(743.3,920.8) rotate(-90)">55,63</text>
<text transform="translate(839.1,920.8) rotate(-90)">61,63</text>
<text transform="translate(949,920.8) rotate(-90)">67,63</text>
<text transform="translate(1013.8,920.8) rotate(-90)">71,63</text>
</g>
<g transform="translate(10,7) scale(1,1.03333)">
<rect x="0" y="0" width="16" height="15" fill="#fff"/>
<polygon points="0,9 16,3 16,15 0,15" fill="#8a1010"/>
<polygon points="0,8 16,2 16,8 0,12" fill="#3a9a20"/>
<polygon points="2,9 14,4 14,6 2,11" fill="#e8e020"/>
<rect x="0" y="13" width="16" height="2" fill="#302080"/>
<rect x="1" y="5" width="3" height="3" fill="#a060a0"/>
</g>
<g transform="translate(15,36.5) scale(1,0.766667)">
<rect x="0" y="0" width="16" height="15" fill="#fff"/>
<polygon points="0,9 16,3 16,15 0,15" fill="#8a1010"/>
<polygon points="0,8 16,2 16,8 0,12" fill="#3a9a20"/>
<polygon points="2,9 14,4 14,6 2,11" fill="#e8e020"/>
<rect x="0" y="13" width="16" height="2" fill="#302080"/>
<rect x="1" y="5" width="3" height="3" fill="#a060a0"/>
</g>
<rect x="1154" y="12.8" width="8" height="2.6" fill="#3a0a1e"/>
<rect x="1180.5" y="7.5" width="9.5" height="7.5" fill="none" stroke="#3a0a1e" stroke-width="1"/><rect x="1180" y="7" width="10.5" height="2" fill="#3a0a1e"/>
<path d="M1217,8 L1225,15.5 M1225,8 L1217,15.5" stroke="#fff" stroke-width="1.5"/>
<rect x="1190" y="43" width="6.5" height="2.2" fill="#5d6b7b"/>
<path d="M1209.5,40.5 h6 v4.5 h-6 z M1212,40.5 v-3 h6 v4.5 h-2" fill="none" stroke="#5d6b7b" stroke-width="1.3"/>
<path d="M1229,38 L1236,45 M1236,38 L1229,45" stroke="#5d6b7b" stroke-width="1.8"/>
<path d="M19.5,60.5 h9 l4.5,4.5 v12 h-13.5 z" fill="#fff" stroke="#6a6a6a" stroke-width="1"/><path d="M28.5,60.5 v4.5 h4.5" fill="#ddd" stroke="#6a6a6a" stroke-width="0.8"/><path d="M20,77.5 h13.5 v-12" fill="none" stroke="#9a9a9a" stroke-width="1"/>
<path d="M54,64 h6 l1.5,1.5 h6 v11 h-13.5 z" fill="#e8c020"/><path d="M54.5,77 l4-8 h12 l-4,8 z" fill="#f8e060"/><path d="M62,63 q3,-4 7,-1 l1,-2 l1.5,6 l-5.5,-0.5 l1.5,-1.5 q-2,-2 -5,0 z" fill="#30b030"/>
<rect x="89" y="60" width="18" height="17" fill="#1450c0"/><rect x="91.5" y="61" width="13" height="7" fill="#e8f4ff"/><rect x="93.5" y="71" width="9" height="6" fill="#a0d0ff"/><rect x="96" y="72" width="3" height="4" fill="#1040a0"/>
<rect x="125" y="60" width="13" height="12" fill="#1a50c0"/><rect x="126.5" y="61.5" width="10" height="6" fill="#d8ecff"/><rect x="130" y="64" width="13.5" height="13" fill="#1450c0"/><rect x="132" y="65" width="9.5" height="6" fill="#e8f4ff"/><rect x="134" y="73" width="6" height="4" fill="#a0d0ff"/>
<text x="168" y="68.5" font-family="Liberation Sans" font-weight="bold" font-size="11" fill="#2a6ac8">kg</text>
<text x="173" y="79" font-family="Liberation Sans" font-weight="bold" font-size="11" fill="#38a838">cm</text>
<text x="205.5" y="65" font-family="Liberation Mono" font-weight="bold" font-size="7.2" fill="#111" textLength="20" lengthAdjust="spacingAndGlyphs">NORM</text>
<path d="M209,77 q0,-7 3,-8 q3,0 3.5,8 M215.5,77 q0.5,-8 3.5,-8 q3,1 3,8" fill="#fff" stroke="#111" stroke-width="1"/><path d="M208,77.5 h15.5" stroke="#2020c0" stroke-width="1.5"/>
<rect x="462.5" y="60.5" width="14" height="14" fill="#fff" stroke="#000" stroke-width="1.3"/><polygon points="462.5,70 467,67 471,67.5 476.5,63 476.5,74.5 462.5,74.5" fill="#f0c020"/><polygon points="462.5,72 468,71 472,69.5 476.5,68.5 476.5,74.5 462.5,74.5" fill="#30b040"/>
<g fill="#2a8a20" stroke="#0a3a0a" stroke-width="0.8">
<circle cx="504" cy="61.5" r="3"/>
<circle cx="508.5" cy="63.5" r="3"/>
<circle cx="511" cy="68" r="3"/>
<circle cx="510" cy="73" r="3"/>
<circle cx="506" cy="76.5" r="3"/>
<circle cx="501" cy="76.5" r="3"/>
<circle cx="497" cy="73" r="3"/>
<circle cx="496" cy="68" r="3"/>
<circle cx="498.5" cy="63.5" r="3"/>
<circle cx="504" cy="68.5" r="3"/>
<circle cx="504" cy="72.5" r="3"/>
<circle cx="500.5" cy="69.5" r="3"/>
<circle cx="507.5" cy="69.5" r="3"/>
</g>
<text x="541" y="65" font-family="Liberation Sans" font-weight="bold" font-size="7" fill="#901020" textLength="17" lengthAdjust="spacingAndGlyphs">DPZ</text>
<path d="M541,73 l2,4.5 l2,-11 h13" fill="none" stroke="#111" stroke-width="1"/>
<text x="545.5" y="71.5" font-family="Liberation Sans" font-weight="bold" font-size="6" fill="#d02020">2</text>
<text x="545.5" y="77.5" font-family="Liberation Sans" font-weight="bold" font-size="6" fill="#2040c0">7</text>
<path d="M551,66.5 h7 l-3,5 l3,5.5 h-7 l3,-5.5 z" fill="#f0f080" stroke="#111" stroke-width="1"/>
<text x="577" y="65" font-family="Liberation Sans" font-weight="bold" font-size="7" fill="#901020" textLength="17" lengthAdjust="spacingAndGlyphs">DPZ</text>
<path d="M578,78 v-12 M578,72 h17" stroke="#111" stroke-width="1"/>
<path d="M579,72 l1.4,-5 l1.4,10 l1.4,-9 l1.4,8 l1.4,-6 l1.4,5 l1.4,-4 l1.4,3 l1.4,-2 l1.4,1 l1.4,-1" fill="none" stroke="#2030c0" stroke-width="0.9"/><path d="M595,72 l-2,-1.5 M595,72 l-2,1.5" stroke="#111" stroke-width="0.9"/>
<path d="M612,73 l1.5,5 l1.5,-12 h17" fill="none" stroke="#111" stroke-width="1.2"/>
<text x="617" y="71" font-family="Liberation Sans" font-weight="bold" font-size="7" fill="#d02020">2</text><text x="617" y="78" font-family="Liberation Sans" font-weight="bold" font-size="7" fill="#2040c0">7</text>
<path d="M622.5,66.5 h8 l-3.5,5.5 l3.5,6 h-8 l3.5,-6 z" fill="#e8f080" stroke="#111" stroke-width="1"/>
<path d="M652,59.5 h10 l5,5 v13.5 h-15 z" fill="#fff" stroke="#111" stroke-width="1"/><path d="M656,67 h8 M656,70 h8 M656,73 h8 M657,76 h7" stroke="#888" stroke-width="0.8"/><rect x="648" y="62" width="9" height="8" fill="#fff" stroke="#1a2a90" stroke-width="1.4"/><text x="649" y="69" font-family="Liberation Sans" font-weight="bold" font-size="7" fill="#1a2a90">W</text>
<circle cx="694.5" cy="69" r="9.5" fill="#3a80e0"/><circle cx="693.5" cy="66" r="5.225" fill="#8cc4f8" opacity="0.6"/>
<text x="694.5" y="73.75" font-family="Liberation Sans" font-weight="bold" font-size="13.775" fill="#fff" text-anchor="middle">?</text>
<polygon points="820,68 826,62.5 840,62.5 840,78 820,78" fill="#f8f040"/><polygon points="820,68 826,62.5 840,62.5 840,67 820,72" fill="#f0a020"/><polygon points="820,76 840,73 840,78 820,78" fill="#2a9a20"/><path d="M820,68 L826,62.5 H840" stroke="#222" stroke-width="0.8" fill="none"/>
<polygon points="954,77 961,59 970,77" fill="#60d060" stroke="#e0e020" stroke-width="1.2"/><polygon points="958,73 964,64 966,74" fill="#d02020"/><path d="M956,74 l14,-14" stroke="#2040c0" stroke-width="1.5"/><path d="M955,62 l3,0" stroke="#707070"/>
<polygon points="1214,103.5 1237,91.5 1237,110.5 1214,110.5" fill="#a8e040"/>
<polygon points="1222,110.5 1237,98.5 1237,110.5 1222,110.5" fill="#30a050"/>
<path d="M1214,103.5 L1237,91.5" stroke="#111" stroke-width="1.2"/><path d="M1214,111 H1237" stroke="#111" stroke-width="1.8"/>
<g fill="#333"><rect x="1215" y="120" width="1" height="1"/><rect x="1215" y="122" width="1" height="1"/><rect x="1215" y="124" width="1" height="1"/><rect x="1215" y="126" width="1" height="1"/><rect x="1215" y="128" width="1" height="1"/><rect x="1215" y="130" width="1" height="1"/><rect x="1217" y="120" width="1" height="1"/><rect x="1217" y="122" width="1" height="1"/><rect x="1217" y="124" width="1" height="1"/><rect x="1217" y="126" width="1" height="1"/><rect x="1217" y="128" width="1" height="1"/><rect x="1217" y="130" width="1" height="1"/><rect x="1219" y="120" width="1" height="1"/><rect x="1219" y="122" width="1" height="1"/><rect x="1219" y="124" width="1" height="1"/><rect x="1219" y="126" width="1" height="1"/><rect x="1219" y="128" width="1" height="1"/><rect x="1219" y="130" width="1" height="1"/><rect x="1221" y="120" width="1" height="1"/><rect x="1221" y="122" width="1" height="1"/><rect x="1221" y="124" width="1" height="1"/><rect x="1221" y="126" width="1" height="1"/><rect x="1221" y="128" width="1" height="1"/><rect x="1221" y="130" width="1" height="1"/><rect x="1223" y="120" width="1" height="1"/><rect x="1223" y="122" width="1" height="1"/><rect x="1223" y="124" width="1" height="1"/><rect x="1223" y="126" width="1" height="1"/><rect x="1223" y="128" width="1" height="1"/><rect x="1223" y="130" width="1" height="1"/><rect x="1225" y="120" width="1" height="1"/><rect x="1225" y="122" width="1" height="1"/><rect x="1225" y="124" width="1" height="1"/><rect x="1225" y="126" width="1" height="1"/><rect x="1225" y="128" width="1" height="1"/><rect x="1225" y="130" width="1" height="1"/></g>
<polygon points="1214,137 1226,134 1237,123 1237,143 1214,143" fill="#c8e050"/>
<path d="M1214,138 q8,-1 12,-5 q6,-5 9,-11 q-1,10 -7,16 q-6,3 -14,3 z" fill="#f07020" stroke="#222" stroke-width="0.8"/>
<polygon points="1222,149.5 1227.5,154.5 1222,159.5 1216.5,154.5" fill="#40c0a0" stroke="#802040" stroke-width="1"/>
<path d="M1214,167.5 L1237,156.5" stroke="#c08060" stroke-width="5"/><path d="M1214,165.5 L1237,154.5" stroke="#222" stroke-width="0.9"/>
<polygon points="1227,172.5 1237,165.5 1237,172.5" fill="#901020"/>
<rect x="1216" y="180" width="12" height="1.6" fill="#e04020"/><rect x="1216" y="183" width="12" height="4" fill="#30a090"/><rect x="1216" y="188" width="12" height="1.6" fill="#e04020"/>
<polygon points="1214,197 1226,194 1237,183 1237,201 1214,201" fill="#30a050"/>
<path d="M1214,197 q7,-1 11,-4 q7,-5 11,-11 q-2,10 -8,15 q-6,2 -14,2 z" fill="#f07020" stroke="#222" stroke-width="0.8"/>
<polygon points="1228,213.5 1237,209.5 1237,232.5 1228,232.5" fill="#30a050"/><polygon points="1214,230.5 1237,224.5 1237,232.5 1214,232.5" fill="#808020"/>
<path d="M1216,212.5 l8,-5 l7,2 q3,6 -1,13 l-6,2 l-7,-3 z" fill="#fff" stroke="#111" stroke-width="1"/><path d="M1222,218.5 v8 M1225,217.5 v9 M1228,216.5 v8" stroke="#111" stroke-width="1"/>
<path d="M1214,239.8 h4 M1214,241.8 h4 v4 h-4" stroke="#2030a0" fill="none" stroke-width="1"/>
<polygon points="1214,252.8 1237,239.8 1237,254.8 1214,255.8" fill="#30a050"/><polygon points="1222,262.8 1237,253.8 1237,262.8 1222,262.8" fill="#901020"/>
<path d="M1219,255.8 l5,-4 l8,-5 v9 l-8,5 z" fill="#c0e040" stroke="#222" stroke-width="0.8"/><path d="M1223,247.8 v8" stroke="#f04040" stroke-width="1.5"/>
<rect x="1220" y="271" width="7" height="10" fill="#c0e040" stroke="#2030a0" stroke-width="1"/><path d="M1214,276 h5 M1228,276 h6 M1219,273 v6 M1228,273 v6" stroke="#2030a0" stroke-width="1"/>
<polygon points="1214,285 1235,285 1231,290 1218,290" fill="#801040"/><rect x="1220" y="286" width="8" height="3" fill="#3090e0"/>
<path d="M1215,301.6 v20 h21 M1213.5,303.6 l1.5,-3 l1.5,3 M1234,320.1 l3,1.5 l-3,1.5" fill="none" stroke="#111" stroke-width="1"/>
<path d="M1218,317.6 q12,0 13,-11" fill="none" stroke="#6070c0" stroke-width="1.5"/>
<text x="1217" y="314.6" font-family="Liberation Sans" font-weight="bold" font-size="7" fill="#111">Ea</text><text x="1227" y="305.6" font-family="Liberation Sans" font-weight="bold" font-size="6" fill="#111">Fs</text>
<path d="M1215,333.2 v17 M1215,342.2 h2 q2,-6 4,0 q2,6 4,0 q2,-6 4,0 q2,5 4,0 q2,-4 4,0" fill="none" stroke="#a0a8b0" stroke-width="1"/>
<polygon points="1214,376.8" fill="#c0e040"/>
<path d="M1214,374.8 q6,-6 12,-8 q6,-2 11,-6 v20 h-23 z" fill="#a0d040"/><path d="M1216,375.8 q6,-4 10,-5 q7,-2 10,-5 q0,8 -6,10 q-8,3 -14,0 z" fill="#2aa060" stroke="#111" stroke-width="0.8"/><path d="M1219,375.8 q6,-3 12,-4" stroke="#f0e020" stroke-width="1.5" fill="none"/>
<circle cx="28" cy="951" r="5.5" fill="#fff" stroke="#111" stroke-width="1.2"/><path d="M25,951 h6 M28,948 v6" stroke="#111" stroke-width="1.2"/><path d="M23.5,955.5 l-8,8" stroke="#c08030" stroke-width="3" stroke-linecap="round"/>
<polygon points="43.5,954 50.5,954 47,958" fill="#111"/>
<polygon points="59,955.5 68,946 68,951 79,951 79,960 68,960 68,965" fill="#1e70d8"/><polygon points="59,955.5 68,946 68,951 70,951 70,960 68,965" fill="#4aaaf0"/>
<polygon points="88,954 95,954 91.5,958" fill="#111"/>
<path d="M106,957 l3,-2 v-7 q1,-2 2,0 v5 v-7 q1,-2 2,0 v7 v-7 q1,-2 2,0 v7 v-5 q1,-2 2,0 v9 q0,6 -6,7 h-3 z" fill="#fff" stroke="#777" stroke-width="1"/>
<text x="133" y="953" font-family="Liberation Serif" font-style="italic" font-size="9" fill="#d02020">A</text><text x="139" y="958" font-family="Liberation Serif" font-style="italic" font-size="9" fill="#2030c0">B</text><text x="145" y="964" font-family="Liberation Serif" font-size="9" fill="#111">C</text>
<path d="M168,961 l10,-12 l3,2 l-10,12 z" fill="#2040c0"/><path d="M166,958 q4,-3 6,0 q0,4 -6,4 z" fill="#111"/><rect x="165" y="963" width="3" height="2" fill="#d02020"/><rect x="172" y="963" width="3" height="2" fill="#30a030"/>
<text x="194" y="965" font-family="Liberation Serif" font-weight="bold" font-size="21" fill="#1020d0">T</text>
<rect x="225" y="947" width="16" height="2.5" fill="#333"/><rect x="226" y="952" width="5" height="8" fill="#fff" stroke="#333"/><rect x="233" y="954" width="7" height="6" fill="#f0e040" stroke="#333"/>
<path d="M252,950 h20 M252,950 l3,-2 M252,950 l3,2 M272,950 l-3,-2 M272,950 l-3,2" stroke="#1040b0" stroke-width="1"/><text x="256" y="963" font-family="Liberation Sans" font-weight="bold" font-size="10" fill="#20a020">50</text>
<text x="283" y="953" font-family="Liberation Sans" font-weight="bold" font-size="9" fill="#111" textLength="20" lengthAdjust="spacingAndGlyphs">DXF</text><path d="M283,956 h20 l-2,2 h-16 z M285,959.5 h16 l-2,2 h-12 z M288,963 h10 l-2,2 h-6 z" fill="#d02020"/>
<path d="M317,946 h10 l5,5 v14 h-15 z" fill="#fff" stroke="#777" stroke-width="1"/><circle cx="326" cy="961" r="4" fill="#e0c020" stroke="#333" stroke-width="0.8"/>
<path d="M347,946 h10 l5,5 v14 h-15 z" fill="#fff" stroke="#888" stroke-width="1"/><circle cx="355" cy="957" r="4.5" fill="#e8f0f8" stroke="#555" stroke-width="1.2"/><path d="M358,960 l5,5" stroke="#555" stroke-width="2"/>
<circle cx="383" cy="955.5" r="9.5" fill="#3a80e0"/><circle cx="382" cy="952.5" r="5.225" fill="#8cc4f8" opacity="0.6"/>
<text x="383" y="960.25" font-family="Liberation Sans" font-weight="bold" font-size="13.775" fill="#fff" text-anchor="middle">?</text>
<g fill="#8e8e8e"><text x="655.5" y="958.5" font-family="Liberation Sans" font-weight="bold" font-size="15">?</text><text x="665.5" y="953" font-family="Liberation Sans" font-size="7.5">FS</text><polygon points="656,966 676,955 676,966"/></g><path d="M661,964 v-2 M665,964 v-4 M669,964 v-6 M673,964 v-8" stroke="#fff" stroke-width="1.5"/>
<polygon points="688,955.5 695,949.5 695,953 705,953 705,958 695,958 695,961.5" fill="#9aa0a8"/>
<polygon points="814,955.5 807,949.5 807,953 797.5,953 797.5,958 807,958 807,961.5" fill="#9aa0a8"/>
<g fill="#b0b0b0"><rect x="1236" y="983" width="2" height="2"/><rect x="1236" y="987" width="2" height="2"/><rect x="1232" y="987" width="2" height="2"/><rect x="1240" y="979" width="2" height="2"/><rect x="1240" y="983" width="2" height="2"/><rect x="1240" y="987" width="2" height="2"/><rect x="1228" y="987" width="2" height="2"/><rect x="1232" y="983" width="2" height="2"/></g>
</svg>
</body></html>
